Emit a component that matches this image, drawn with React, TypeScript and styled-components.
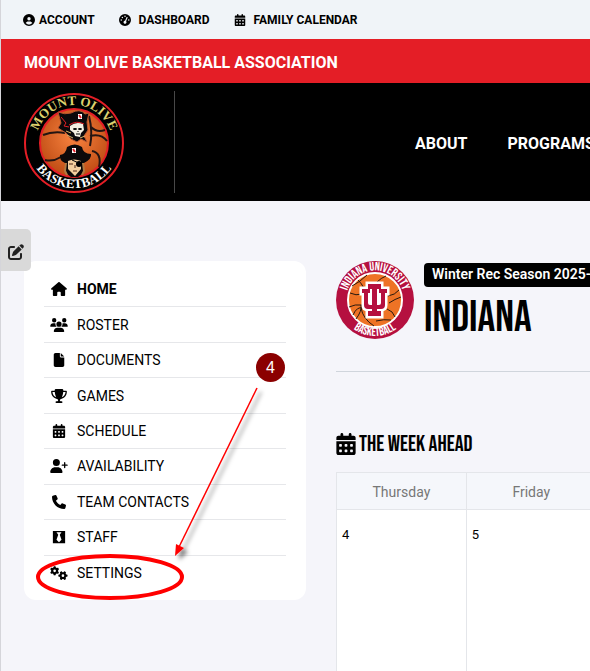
import React from "react";
import styled, { createGlobalStyle } from "styled-components";
import {
  FaCircleUser, FaGaugeHigh, FaCalendarDays, FaHouse, FaUsers, FaFile, FaTrophy,
  FaUserPlus, FaPhone, FaBlackTie, FaGears, FaPenToSquare,
} from "react-icons/fa6";

const Global = createGlobalStyle`
  *, *::before, *::after { box-sizing: border-box; }
  html, body { margin: 0; }
  body {
    background: #f5f5fa;
    color: #000;
    font-family: Roboto, "Liberation Sans", sans-serif;
    overflow: hidden;
  }
  a { color: inherit; text-decoration: none; }
`;

const displayFont = `"Bebas Neue", "Roboto Condensed", "Liberation Sans Narrow", sans-serif`;

const Page = styled.div`
  position: relative;
  min-height: 100vh;
  border-left: 1px solid #d5d5da;
`;

const UtilityBar = styled.nav`
  display: flex;
  align-items: center;
  gap: 24px;
  height: 39px;
  padding: 0 22px;
  background: #f0f4f8;
`;

const UtilityLink = styled.a<{ $gap?: number }>`
  display: inline-flex;
  align-items: center;
  gap: ${(p) => p.$gap ?? 8}px;
  font-size: 12px;
  font-weight: 700;
  white-space: nowrap;
`;

const OrgBar = styled.div`
  display: flex;
  align-items: center;
  height: 44px;
  padding: 2px 23px 0;
  background: #e41e26;
  color: #fff;
  font-size: 16px;
  font-weight: 700;
`;

const Header = styled.header`
  display: flex;
  align-items: center;
  height: 118px;
  padding: 0 0 0 22px;
  background: #000;
  overflow: hidden;
`;

const LogoCell = styled.div`
  display: flex;
  flex: none;
  width: 152px;
  height: 102px;
  border-right: 1px solid #484848;
`;

const MainNav = styled.nav`
  display: flex;
  gap: 40px;
  padding: 2px 0 0 240px;
  color: #fff;
  font-size: 16px;
  font-weight: 700;
`;

const Body = styled.main`
  display: grid;
  grid-template-columns: 282px minmax(0, 1fr);
  gap: 30px;
  align-items: start;
  padding: 60px 0 0 23px;
`;

const EditTab = styled.button`
  position: absolute;
  z-index: 2;
  left: 0;
  top: 229px;
  display: grid;
  place-items: center;
  width: 30px;
  height: 42px;
  padding: 4px 0 0;
  border: 0;
  border-radius: 0 5px 5px 0;
  background: #d9d9d9;
  color: #222;
  font-size: 16px;
`;

const SideCard = styled.aside`
  position: relative;
  padding: 11px 20px 9px;
  border-radius: 12px;
  background: #fff;
`;

const Menu = styled.ul`
  display: grid;
  grid-template-rows: repeat(9, 1fr);
  height: 319px;
  margin: 0;
  padding: 0;
  list-style: none;
`;

const MenuItem = styled.li`
  display: flex;
  border-bottom: 1px solid #e6e7ea;
  &:last-child { border-bottom: 0; }
`;

const MenuLink = styled.a<{ $active?: boolean }>`
  display: flex;
  align-items: center;
  flex: 1;
  gap: 9px;
  font-size: 14px;
  font-weight: ${(p) => (p.$active ? 700 : 400)};
`;

const IconSlot = styled.span`
  display: inline-flex;
  width: 18px;
  margin-left: 6px;
  svg { flex: none; width: 18px; height: 14px; }
`;

const Annotation = styled.svg`
  position: absolute;
  left: 0;
  top: 80px;
  pointer-events: none;
`;

const StepBadge = styled.span`
  position: absolute;
  left: 232px;
  top: 92px;
  display: grid;
  place-items: center;
  width: 29px;
  height: 29px;
  border-radius: 50%;
  background: #8b0000;
  color: #fff;
  font: 16px "Liberation Sans", sans-serif;
`;

const Content = styled.section`
  overflow: hidden;
`;

const TeamHead = styled.div`
  display: flex;
  gap: 10px;
  height: 111px;
  border-bottom: 1px solid #d0d5dc;
  svg { flex: none; }
`;

const TeamText = styled.div`
  padding-top: 2px;
`;

const Season = styled.div`
  width: max-content;
  padding: 0 8px 1px;
  border-radius: 4px;
  background: #000;
  color: #fff;
  font-size: 14px;
  font-weight: 600;
  line-height: 23px;
`;

const TeamName = styled.h1`
  margin: 10px 0 0;
  font: 400 44px/42px ${displayFont};
`;

const WeekTitle = styled.h2`
  display: flex;
  align-items: center;
  gap: 3px;
  height: 28px;
  margin: 58px 0 14px;
  font: 400 22px/28px ${displayFont};
  white-space: nowrap;
  svg { flex: none; width: 20px; height: 22px; }
  span { padding-top: 2px; }
`;

const Week = styled.table`
  width: 910px;
  border-collapse: collapse;
  table-layout: fixed;
  background: #fff;
  th, td { border: 1px solid #e4e6ea; }
  th {
    height: 37px;
    padding: 2px 0 0;
    background: #f5f7fb;
    color: #777;
    font-size: 14px;
    font-weight: 400;
  }
  td {
    height: 163px;
    padding: 17px 5px;
    vertical-align: top;
    font-size: 13px;
  }
`;

const utilityLinks = [
  { label: "ACCOUNT", icon: <FaCircleUser />, gap: 4 },
  { label: "DASHBOARD", icon: <FaGaugeHigh /> },
  { label: "FAMILY CALENDAR", icon: <FaCalendarDays /> },
];

const menu = [
  { label: "HOME", icon: <FaHouse />, active: true },
  { label: "ROSTER", icon: <FaUsers /> },
  { label: "DOCUMENTS", icon: <FaFile /> },
  { label: "GAMES", icon: <FaTrophy /> },
  { label: "SCHEDULE", icon: <FaCalendarDays /> },
  { label: "AVAILABILITY", icon: <FaUserPlus /> },
  { label: "TEAM CONTACTS", icon: <FaPhone /> },
  { label: "STAFF", icon: <FaBlackTie /> },
  { label: "SETTINGS", icon: <FaGears /> },
];

const days = ["Thursday", "Friday", "Saturday", "Sunday", "Monday", "Tuesday", "Wednesday"];

function ClubLogo() {
  return (
    <svg width="102" height="102" viewBox="0 0 102 102" role="img" aria-label="Mount Olive Basketball">
      <defs>
        <radialGradient id="ball" cx=".5" cy=".4" r=".65">
          <stop offset="0" stopColor="#fa8440" />
          <stop offset="1" stopColor="#b94710" />
        </radialGradient>
        <path id="clubTop" d="M13 52a38 38 0 0 1 76 0" />
        <path id="clubBottom" d="M5 51a46 46 0 0 0 92 0" />
      </defs>
      <circle cx="51" cy="52" r="49" fill="#000" stroke="#e41e26" strokeWidth="2" />
      <circle cx="51" cy="52" r="34" fill="url(#ball)" stroke="#e41e26" strokeWidth="2" />
      <path
        fill="none" stroke="#241512" strokeWidth="2"
        d="M20 44q10-4 22-2M22 69q8 2 16-3M66 25q4 16 1 30M68 36q6 6 14 3M67 45q11-3 17 5M69 60q10 2 7 16"
      />
      <path d="M35 21q7 3 13 1 9-5 14 1l4-1-2 9 1 8-4 6 3 6-6-3-4 3-6-3-5-6-8-5 3-5Z" fill="#0b090b" stroke="#b8542f" />
      <path d="M38 26l5 6-2 3 5 1" fill="none" stroke="#e41e26" strokeWidth="1" />
      <path d="M47 35q6-5 13-2l1 6-3 3-1 4-5-1-1-3-4-3Z" fill="#f4efe2" />
      <path d="M43 40l5 2m9 5 5-2M44 44l6 3" stroke="#d8b46a" strokeWidth="1" />
      <path d="M46 34q8-5 15-1" fill="none" stroke="#e41e26" />
      <ellipse cx="52" cy="38" rx="2" ry="1" fill="#000" />
      <ellipse cx="57" cy="38" rx="2" ry="1" fill="#000" />
      <path d="M53 43h4m-2-3v1" stroke="#000" />
      <path d="M57 23v5" stroke="#fff" strokeWidth="4" />
      <path d="M56 24l2 3" stroke="#e41e26" strokeWidth="2" />
      <path d="M37 64q6-1 7-8 8-5 15 0 1 7 9 7 1 5-7 9l-1 10-5 4h-7l-5-4-1-10q-6-3-5-8Z" fill="#0c090a" />
      <path d="M45 70q6-3 13 0v8l-6 7-7-7Z" fill="#f4cf9e" />
      <path d="M43 72l-1 8 2 4m16-12 1 8-2 4" fill="none" stroke="#b07a42" strokeWidth="2" />
      <path d="M46 73h4m0 7h4M52 74v3" fill="none" stroke="#4c2719" />
      <path d="M49 69l9 4" stroke="#000" />
      <circle cx="56" cy="73" r="3" fill="#000" />
      <path d="M51 57v5" stroke="#fff" strokeWidth="4" />
      <path d="M50 58l2 3" stroke="#e41e26" strokeWidth="2" />
      <g fontFamily="Liberation Serif, serif" fontSize="13" fontWeight="700" textAnchor="middle">
        <text fill="#ded16d"><textPath href="#clubTop" startOffset="50%">MOUNT OLIVE</textPath></text>
        <text fill="#fff"><textPath href="#clubBottom" startOffset="50%">BASKETBALL</textPath></text>
      </g>
    </svg>
  );
}

const monogramStem = "M32 23h13v5h-4v22h4v5H32v-5h4V28h-4Z";
const monogramCup = "M26 28h8v4h-2v10q0 2 2 2h9q2 0 2-2V32h-2v-4h8v4h-2v12q0 4-4 4H32q-4 0-4-4V32h-2Z";

function TeamLogo() {
  return (
    <svg width="78" height="78" viewBox="0 0 78 78" role="img" aria-label="Indiana University Basketball">
      <defs>
        <path id="teamTop" d="M12 49a29 29 0 1 1 54 0" />
        <path id="teamBottom" d="M3 39a36 36 0 0 0 72 0" />
      </defs>
      <circle cx="39" cy="39" r="39" fill="#b5103f" />
      <circle cx="39" cy="39" r="27" fill="#ee7325" stroke="#fff" strokeWidth="2" />
      <path
        fill="none" stroke="#27180f" strokeWidth="1"
        d="M14 32q6 3 12 1M13 46q6-3 13-2M22 19q8 8 6 14M17 54q4-9 10-7M20 58q6-8 5-14M53 42q6-4 12-6M52 35q7-1 11-6M31 14q-7 7-15 11M50 15q-5 2-9 6M25 47q2 11 13 18M51 48q6 2 8 8M40 60q8-2 15-1"
      />
      <path d={monogramStem} fill="#fff" stroke="#fff" strokeWidth="5" />
      <path d={monogramCup} fill="#fff" stroke="#fff" strokeWidth="5" />
      <path d={monogramCup} fill="#b5103f" />
      <path d={monogramStem} fill="#b5103f" />
      <path d="M35 33v10m7-10v10" stroke="#fff" />
      <g fill="#fff" fontFamily="'Bebas Neue', 'Liberation Sans Narrow', sans-serif" fontSize="12" textAnchor="middle">
        <text><textPath href="#teamTop" startOffset="50%">INDIANA UNIVERSITY</textPath></text>
        <text><textPath href="#teamBottom" startOffset="50%">BASKETBALL</textPath></text>
      </g>
    </svg>
  );
}

function Callout() {
  return (
    <Annotation width="282" height="260" viewBox="0 0 282 260" aria-hidden="true">
      <defs>
        <filter id="shade" x="-20%" y="-20%" width="150%" height="150%">
          <feDropShadow dx="4" dy="4" stdDeviation="2" floodOpacity=".5" />
        </filter>
      </defs>
      <g filter="url(#shade)">
        <path d="M233 47 155 206" stroke="red" strokeWidth="1.5" />
        <path d="m151 215 1-12 8 4Z" fill="red" />
      </g>
      <ellipse cx="86" cy="236" rx="72" ry="21" fill="none" stroke="red" strokeWidth="4" />
    </Annotation>
  );
}

export default function App() {
  return (
    <Page>
      <Global />
      <UtilityBar>
        {utilityLinks.map((l) => (
          <UtilityLink key={l.label} href="#" $gap={l.gap}>{l.icon}{l.label}</UtilityLink>
        ))}
      </UtilityBar>
      <OrgBar>MOUNT OLIVE BASKETBALL ASSOCIATION</OrgBar>
      <Header>
        <LogoCell><ClubLogo /></LogoCell>
        <MainNav>
          <a href="#">ABOUT</a>
          <a href="#">PROGRAMS</a>
        </MainNav>
      </Header>
      <EditTab aria-label="Edit"><FaPenToSquare /></EditTab>
      <Body>
        <SideCard>
          <Menu>
            {menu.map((m) => (
              <MenuItem key={m.label}>
                <MenuLink href="#" $active={m.active}>
                  <IconSlot>{m.icon}</IconSlot>{m.label}
                </MenuLink>
              </MenuItem>
            ))}
          </Menu>
          <Callout />
          <StepBadge>4</StepBadge>
        </SideCard>
        <Content>
          <TeamHead>
            <TeamLogo />
            <TeamText>
              <Season>Winter Rec Season 2025-26</Season>
              <TeamName>INDIANA</TeamName>
            </TeamText>
          </TeamHead>
          <WeekTitle><FaCalendarDays /><span>THE WEEK AHEAD</span></WeekTitle>
          <Week>
            <thead><tr>{days.map((d) => <th key={d}>{d}</th>)}</tr></thead>
            <tbody><tr>{days.map((d, i) => <td key={d}>{i + 4}</td>)}</tr></tbody>
          </Week>
        </Content>
      </Body>
    </Page>
  );
}
